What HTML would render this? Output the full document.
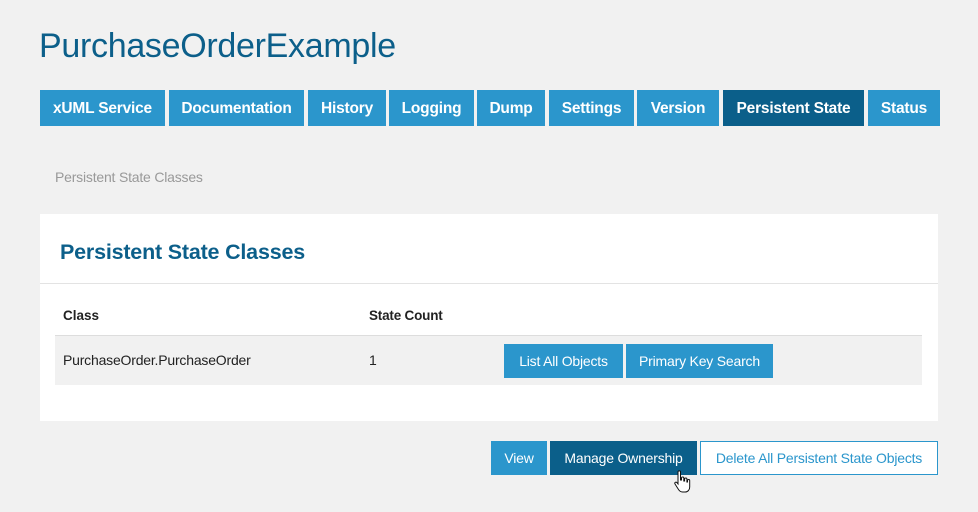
<!DOCTYPE html><html><head><style>
body{margin:0;width:978px;height:512px;background:#f1f1f1;font-family:"Liberation Sans",sans-serif;position:relative;overflow:hidden}
.a{position:absolute;box-sizing:border-box}
.n{background:#2b96cc;color:#fff;font-weight:bold;font-size:15.5px;height:36px;line-height:37px;text-align:center;top:90px;letter-spacing:-0.2px}
.b{background:#2b96cc;color:#fff;font-size:14px;text-align:center;line-height:34px;height:34px;letter-spacing:-0.2px}
</style></head><body>
<div class="a" style="left:39px;top:27px;font-size:34px;color:#0c5f8a;letter-spacing:-0.3px">PurchaseOrderExample</div>
<div class="a n" style="left:40px;width:125px">xUML Service</div>
<div class="a n" style="left:169px;width:135px">Documentation</div>
<div class="a n" style="left:308px;width:78px">History</div>
<div class="a n" style="left:389px;width:85px">Logging</div>
<div class="a n" style="left:477px;width:68px">Dump</div>
<div class="a n" style="left:549px;width:85px">Settings</div>
<div class="a n" style="left:637px;width:82px">Version</div>
<div class="a n" style="left:723px;width:141px;background:#0b5f8a">Persistent State</div>
<div class="a n" style="left:868px;width:72px">Status</div>
<div class="a" style="left:55px;top:169px;font-size:14px;color:#999;letter-spacing:-0.2px">Persistent State Classes</div>
<div class="a" style="left:40px;top:214px;width:898px;height:207px;background:#fff"></div>
<div class="a" style="left:60px;top:240px;font-size:21.5px;font-weight:bold;color:#0c5f8a;letter-spacing:-0.2px">Persistent State Classes</div>
<div class="a" style="left:40px;top:283px;width:898px;height:1px;background:#e3e3e3"></div>
<div class="a" style="left:63px;top:308px;font-size:13.5px;font-weight:bold;color:#222">Class</div>
<div class="a" style="left:369px;top:308px;font-size:13.5px;font-weight:bold;color:#222;letter-spacing:-0.2px">State Count</div>
<div class="a" style="left:55px;top:335px;width:867px;height:50px;background:#f1f1f1;border-top:1px solid #ddd"></div>
<div class="a" style="left:63px;top:352px;font-size:14px;color:#222;letter-spacing:-0.2px">PurchaseOrder.PurchaseOrder</div>
<div class="a" style="left:369px;top:352px;font-size:14px;color:#222">1</div>
<div class="a b" style="left:504px;top:344px;width:119px">List All Objects</div>
<div class="a b" style="left:626px;top:344px;width:147px">Primary Key Search</div>
<div class="a b" style="left:491px;top:441px;width:56px">View</div>
<div class="a b" style="left:550px;top:441px;width:147px;background:#0b5f8a">Manage Ownership</div>
<div class="a b" style="left:700px;top:441px;width:238px;background:#fff;color:#2b96cc;border:1px solid #2b96cc;line-height:32px">Delete All Persistent State Objects</div>
<svg class="a" style="left:673px;top:470px" width="20" height="24" viewBox="0 0 20 24"><path d="M5 2c0-1.5 2.5-1.5 2.5 0v8h1V8c0-1.3 2.3-1.3 2.3 0v3h.8V9c0-1.3 2.3-1.3 2.3 0v3h.6v-1.5c0-1.3 2.2-1.3 2.2 0V17c0 3-2 5-4.5 5H9.5c-2 0-3-1-4-2.5L2 14c-.8-1.3.8-2.5 1.8-1.5L5 14Z" fill="#fff" stroke="#111" stroke-width="1"/></svg>
</body></html>
